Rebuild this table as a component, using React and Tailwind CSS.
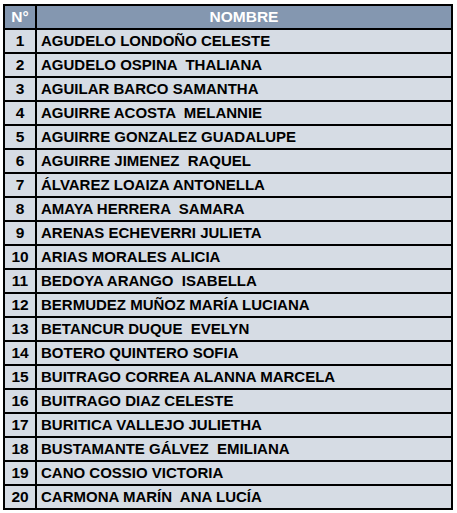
import React from "react";

const names = [
  "AGUDELO LONDOÑO CELESTE",
  "AGUDELO OSPINA  THALIANA",
  "AGUILAR BARCO SAMANTHA",
  "AGUIRRE ACOSTA  MELANNIE",
  "AGUIRRE GONZALEZ GUADALUPE",
  "AGUIRRE JIMENEZ  RAQUEL",
  "ÁLVAREZ LOAIZA ANTONELLA",
  "AMAYA HERRERA  SAMARA",
  "ARENAS ECHEVERRI JULIETA",
  "ARIAS MORALES ALICIA",
  "BEDOYA ARANGO  ISABELLA",
  "BERMUDEZ MUÑOZ MARÍA LUCIANA",
  "BETANCUR DUQUE  EVELYN",
  "BOTERO QUINTERO SOFIA",
  "BUITRAGO CORREA ALANNA MARCELA",
  "BUITRAGO DIAZ CELESTE",
  "BURITICA VALLEJO JULIETHA",
  "BUSTAMANTE GÁLVEZ  EMILIANA",
  "CANO COSSIO VICTORIA",
  "CARMONA MARÍN  ANA LUCÍA",
];

export default function App() {
  return (
    <div className="bg-white w-[457px] h-[513px] pl-[3px] pt-[4px]" style={{ fontFamily: '"Liberation Sans", Arial, sans-serif' }}>
      <table className="border-collapse border-2 border-black w-[450px] text-[15px] leading-[18px] font-bold">
        <thead>
          <tr className="h-[24px] bg-[#8497b0] text-white">
            <th className="w-[32px] border-2 border-black text-center p-0 font-bold text-[15.5px]">N°</th>
            <th className="border-2 border-black text-center p-0 font-bold text-[15.5px]">NOMBRE</th>
          </tr>
        </thead>
        <tbody>
          {names.map((n, i) => (
            <tr key={i} className="h-[24px] bg-[#d6dce4] text-black">
              <td className="border-2 border-black text-center p-0 text-[15.5px]">{i + 1}</td>
              <td className="border-2 border-black pl-[4px] p-0 whitespace-pre">{n}</td>
            </tr>
          ))}
        </tbody>
      </table>
    </div>
  );
}
